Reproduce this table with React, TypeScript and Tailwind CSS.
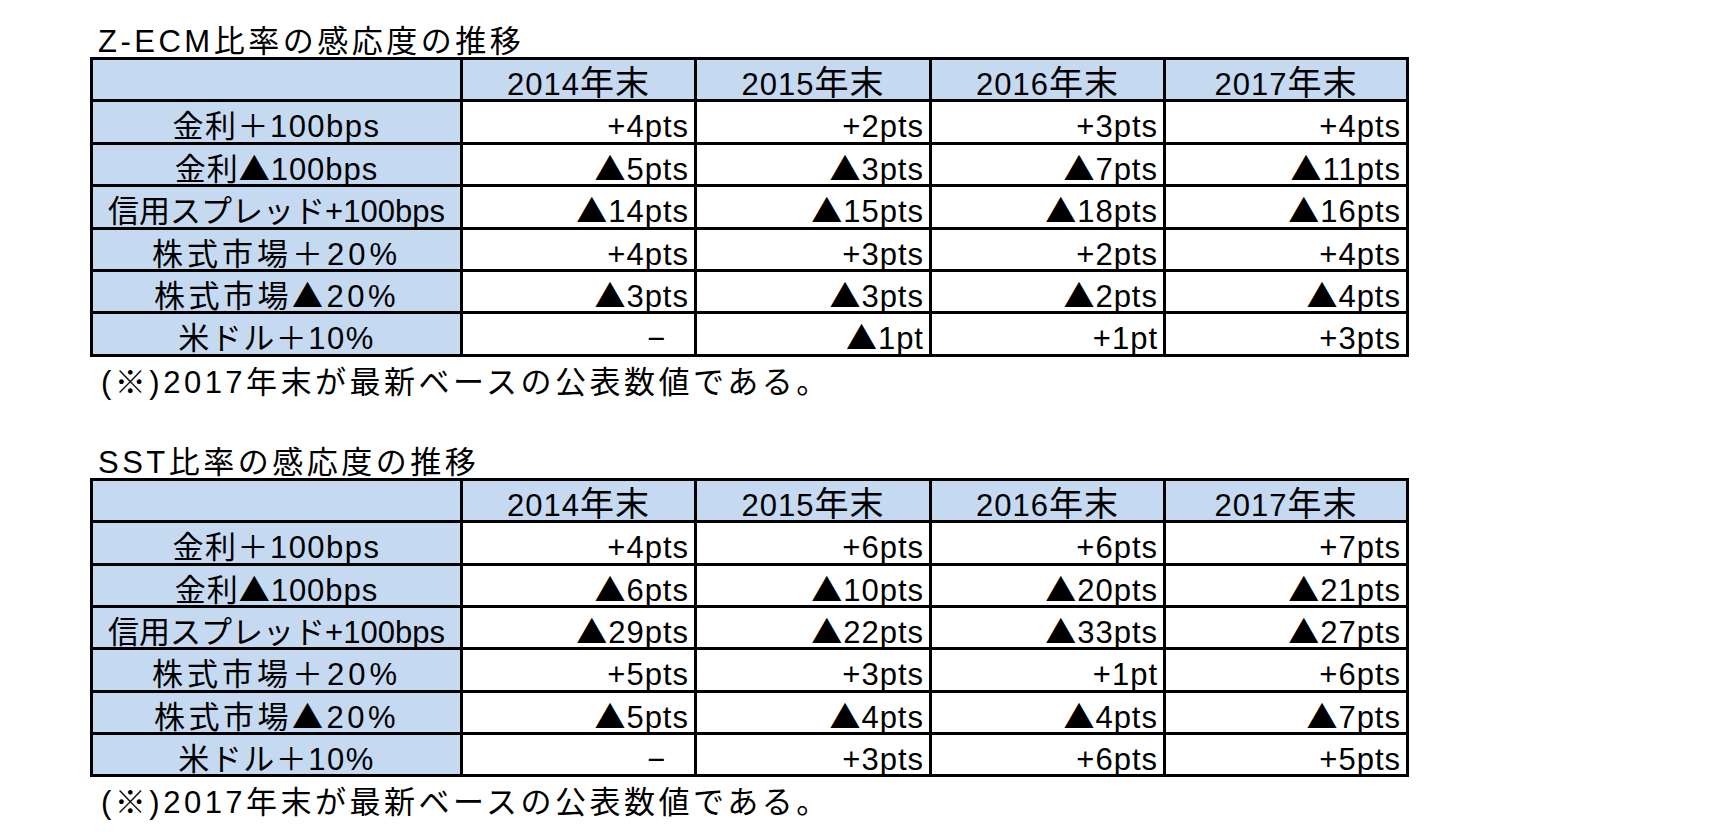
import React from 'react'

const years = ['2014', '2015', '2016', '2017']

const labels = [
  { text: '金利＋100bps', tr: 'tracking-[1.5px]' },
  { text: '金利▲100bps', tr: 'tracking-[1px]' },
  { text: '信用スプレッド+100bps', tr: 'tracking-[0px]' },
  { text: '株式市場＋20%', tr: 'tracking-[4px]' },
  { text: '株式市場▲20%', tr: 'tracking-[3.5px]' },
  { text: '米ドル＋10%', tr: 'tracking-[1.5px]' },
]

const zecm = [
  ['+4pts', '+2pts', '+3pts', '+4pts'],
  ['▲5pts', '▲3pts', '▲7pts', '▲11pts'],
  ['▲14pts', '▲15pts', '▲18pts', '▲16pts'],
  ['+4pts', '+3pts', '+2pts', '+4pts'],
  ['▲3pts', '▲3pts', '▲2pts', '▲4pts'],
  ['−', '▲1pt', '+1pt', '+3pts'],
]

const sst = [
  ['+4pts', '+6pts', '+6pts', '+7pts'],
  ['▲6pts', '▲10pts', '▲20pts', '▲21pts'],
  ['▲29pts', '▲22pts', '▲33pts', '▲27pts'],
  ['+5pts', '+3pts', '+1pt', '+6pts'],
  ['▲5pts', '▲4pts', '▲4pts', '▲7pts'],
  ['−', '+3pts', '+6pts', '+5pts'],
]

// ▲ は CJK フォントの大きい三角で描く（行の高さは変えない）
const Tri = ({ s }: { s: string }) => (
  <>
    {s.split('▲').map((part, i) =>
      i === 0 ? (
        part
      ) : (
        <React.Fragment key={i}>
          <span className="font-['Noto_Sans_CJK_JP',sans-serif] leading-[0]">▲</span>
          {part}
        </React.Fragment>
      )
    )}
  </>
)

const SensTable = ({ title, rows }: { title: string; rows: string[][] }) => {
  return (
    <div>
      <div className="ml-[8px] pt-[1px] leading-[30px] tracking-[3.5px] whitespace-nowrap">{title}</div>

      <div className="grid grid-cols-[367px_231px_232px_231px_240px] auto-rows-[39.4px] gap-[3px] border-[3px] border-black bg-black w-fit">
        <div className="bg-[#c5d9f1]" />
        {years.map((y) => (
          <div key={y} className="bg-[#c5d9f1] text-center pt-[5px] leading-[39px] tracking-[1px] whitespace-nowrap">
            {y}
            <span className="text-[34px] leading-[0]">年末</span>
          </div>
        ))}

        {rows.map((vals, i) => (
          <React.Fragment key={i}>
            <div className={`bg-[#c5d9f1] text-center pt-[5px] leading-[39px] whitespace-nowrap ${labels[i].tr}`}>
              <Tri s={labels[i].text} />
            </div>
            {vals.map((v, j) => (
              <div
                key={j}
                className={`bg-white text-right pt-[5px] leading-[39px] tracking-[1px] whitespace-nowrap ${v === '−' ? 'pr-[28px]' : 'pr-[5px]'}`}
              >
                <Tri s={v} />
              </div>
            ))}
          </React.Fragment>
        ))}
      </div>

      <div className="ml-[11px] pt-[11px] leading-[30px] tracking-[3.5px] whitespace-nowrap">
        (※)2017年末が最新ベースの公表数値である。
      </div>
    </div>
  )
}

const App = () => {
  return (
    <div className="w-[1722px] h-[837px] overflow-hidden bg-white text-black pl-[90px] pt-[26px] text-[31px] font-['Liberation_Sans','Noto_Sans_CJK_JP',sans-serif]">
      <SensTable title="Z-ECM比率の感応度の推移" rows={zecm} />
      <div className="mt-[49px]">
        <SensTable title="SST比率の感応度の推移" rows={sst} />
      </div>
    </div>
  )
}

export default App
